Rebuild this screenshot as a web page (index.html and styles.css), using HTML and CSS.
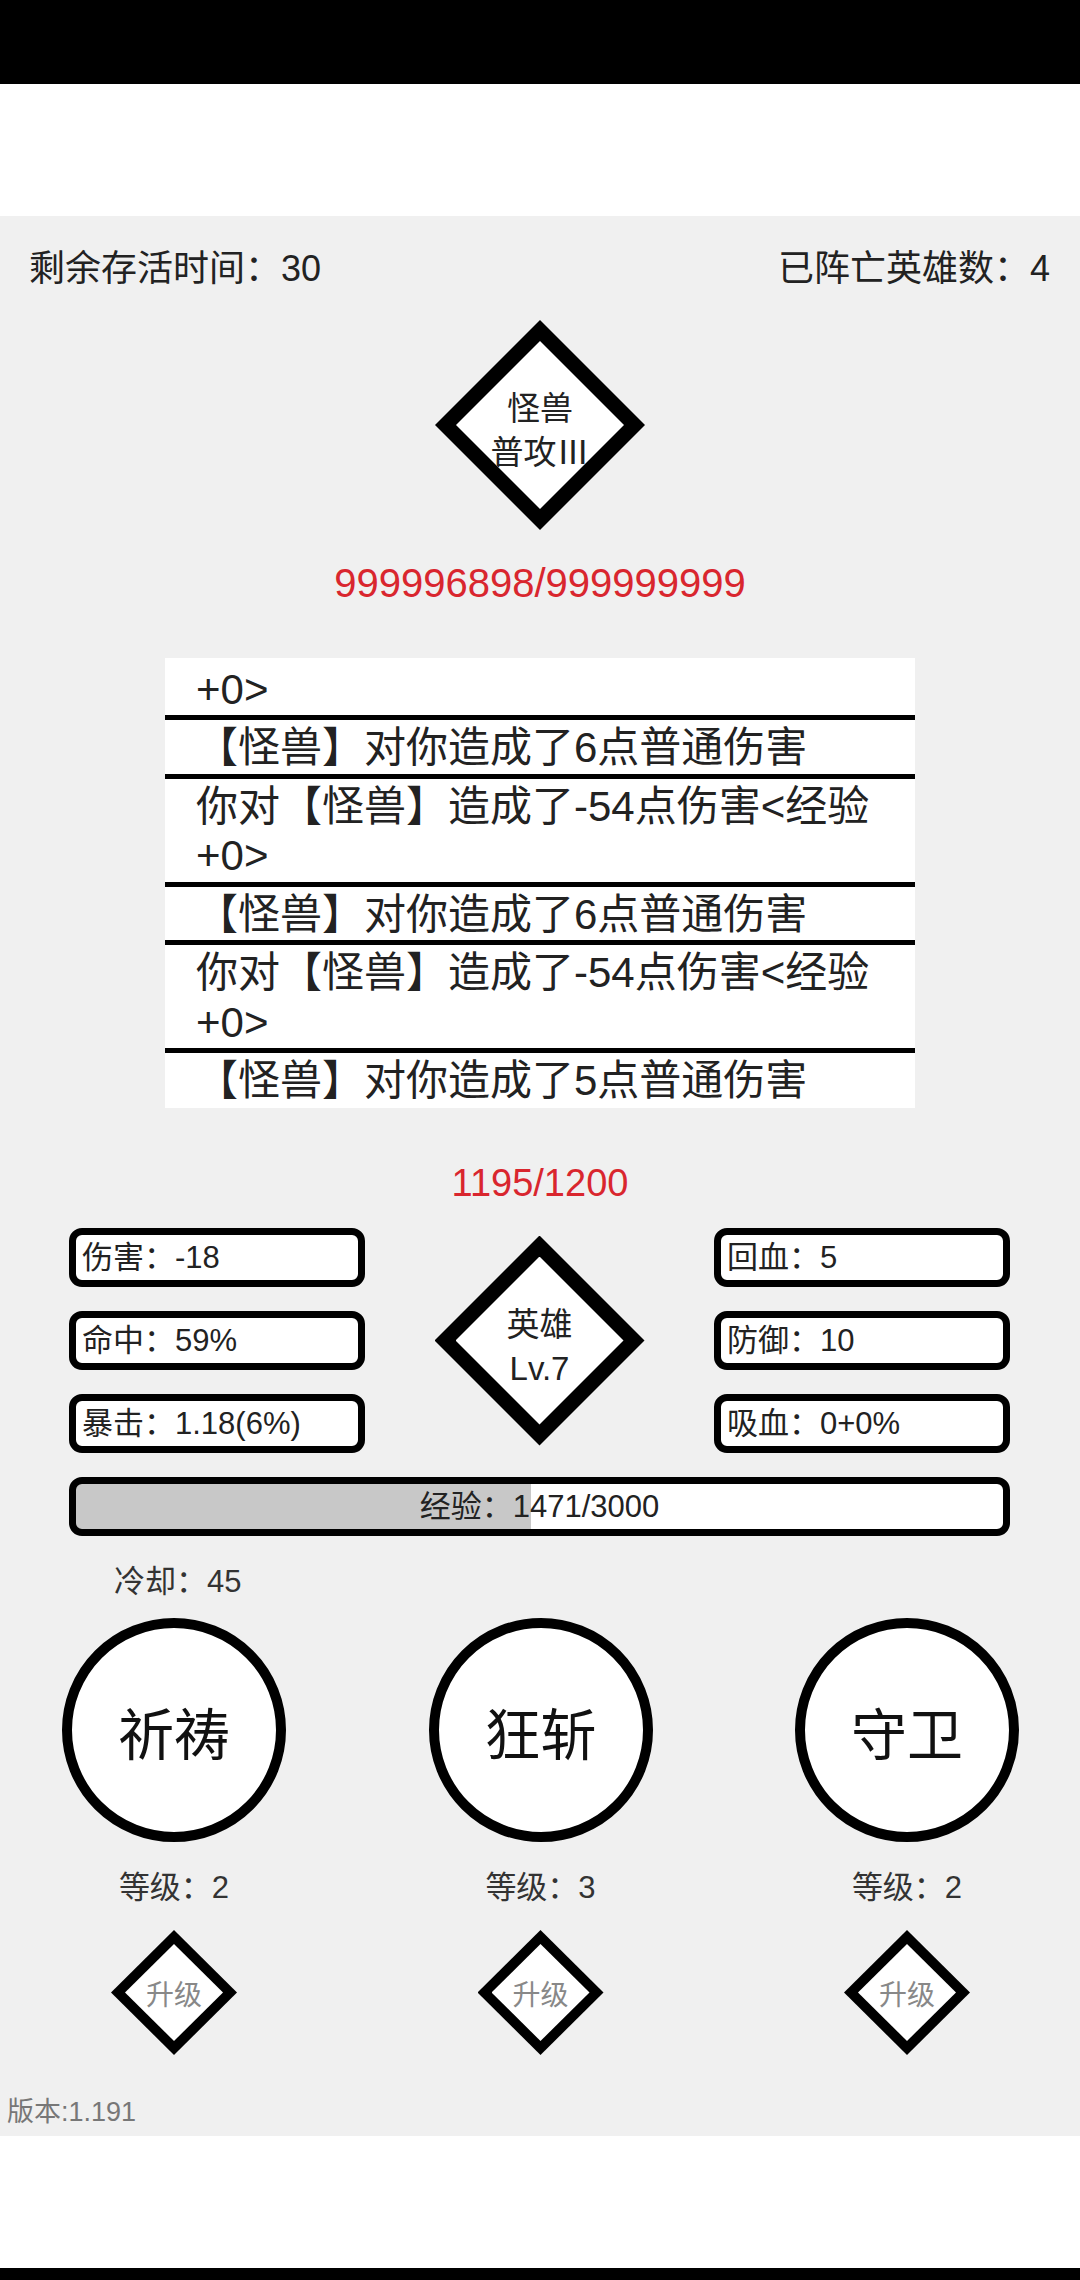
FILE: index.html
```html
<!DOCTYPE html>
<html lang="zh-CN">
<head>
<meta charset="utf-8">
<title>怪兽</title>
<link rel="stylesheet" href="styles.css">
</head>
<body>
<div class="statusbar"></div>
<div class="topspace"></div>
<main class="game">
  <div class="topbar">
    <span>剩余存活时间：30</span>
    <span>已阵亡英雄数：4</span>
  </div>
  <div class="rhomb big boss">
    <div class="rhomb-inner">
      <div>怪兽</div>
      <div>普攻Ⅲ</div>
    </div>
  </div>
  <div class="hp boss-hp">999996898/999999999</div>
  <div class="log">
    <div class="log-list">
      <div class="log-row">你对【怪兽】造成了-54点伤害&lt;经验+0&gt;</div>
      <div class="log-row">【怪兽】对你造成了6点普通伤害</div>
      <div class="log-row">你对【怪兽】造成了-54点伤害&lt;经验+0&gt;</div>
      <div class="log-row">【怪兽】对你造成了6点普通伤害</div>
      <div class="log-row">你对【怪兽】造成了-54点伤害&lt;经验+0&gt;</div>
      <div class="log-row">【怪兽】对你造成了5点普通伤害</div>
    </div>
  </div>
  <div class="hp hero-hp">1195/1200</div>
  <div class="stats">
    <div class="stat-col">
      <div class="stat">伤害：-18</div>
      <div class="stat">命中：59%</div>
      <div class="stat">暴击：1.18(6%)</div>
    </div>
    <div class="rhomb big hero">
      <div class="rhomb-inner">
        <div>英雄</div>
        <div>Lv.7</div>
      </div>
    </div>
    <div class="stat-col">
      <div class="stat">回血：5</div>
      <div class="stat">防御：10</div>
      <div class="stat">吸血：0+0%</div>
    </div>
  </div>
  <div class="exp" style="--p: 49.03%">经验：1471/3000</div>
  <div class="cooldown">冷却：45</div>
  <div class="skills">
    <div class="skill">
      <div class="skill-btn">祈祷</div>
      <div class="level">等级：2</div>
      <div class="rhomb upgrade"><div class="rhomb-inner">升级</div></div>
    </div>
    <div class="skill">
      <div class="skill-btn">狂斩</div>
      <div class="level">等级：3</div>
      <div class="rhomb upgrade"><div class="rhomb-inner">升级</div></div>
    </div>
    <div class="skill">
      <div class="skill-btn">守卫</div>
      <div class="level">等级：2</div>
      <div class="rhomb upgrade"><div class="rhomb-inner">升级</div></div>
    </div>
  </div>
  <div class="version">版本:1.191</div>
</main>
<div class="bottomspace"></div>
<div class="navbar"></div>
</body>
</html>
```
FILE: styles.css
```css
html, body {
  margin: 0;
  padding: 0;
}
body {
  width: 1080px;
  background: #fff;
  font-family: "Liberation Sans", "Noto Sans CJK SC", sans-serif;
  color: #222;
}
.statusbar {
  height: 84px;
  background: #000;
}
.topspace {
  height: 132px;
  background: #fff;
}
.game {
  height: 1920px;
  background: #f0f0f0;
  display: flex;
  flex-direction: column;
  overflow: hidden;
}
.topbar {
  margin-top: 28px;
  display: flex;
  justify-content: space-between;
  padding: 0 30px 0 29px;
  font-size: 36px;
  line-height: 50px;
  color: #222;
}
.rhomb {
  background: #000;
  clip-path: polygon(50% 0, 100% 50%, 50% 100%, 0 50%);
  display: flex;
  flex: none;
}
.rhomb-inner {
  flex: 1;
  background: #fff;
  clip-path: polygon(50% 0, 100% 50%, 50% 100%, 0 50%);
  display: flex;
  flex-direction: column;
  align-items: center;
  justify-content: center;
  white-space: nowrap;
}
.rhomb.big {
  width: 210px;
  height: 210px;
}
.rhomb.big .rhomb-inner {
  margin: 21px;
  padding-top: 12px;
  font-size: 33px;
  line-height: 44px;
  color: #222;
}
.boss {
  margin: 26px auto 0;
}
.hp {
  margin-top: 28px;
  text-align: center;
  color: #d9262e;
  font-size: 38px;
  line-height: 50px;
}
.boss-hp {
  font-size: 40px;
}
.log {
  margin: 50px 0 0 165px;
  width: 750px;
  height: 450px;
  background: #fff;
  overflow: hidden;
}
.log-list {
  margin-top: -46px;
}
.log-row {
  padding: 3px 10px 1px 31px;
  font-size: 42px;
  line-height: 49.5px;
  border-bottom: 5px solid #000;
  color: #222;
}
.log-row:last-child {
  border-bottom: none;
}
.hero-hp {
  margin-top: 50px;
}
.stats {
  margin-top: 20px;
  display: flex;
  justify-content: space-between;
  align-items: center;
  padding: 0 70px 0 69px;
}
.stat-col {
  display: flex;
  flex-direction: column;
  gap: 24px;
}
.stat {
  width: 296px;
  height: 59px;
  box-sizing: border-box;
  border: 7px solid #000;
  border-radius: 13px;
  background: #fff;
  padding-left: 6px;
  font-size: 31px;
  line-height: 45px;
  white-space: nowrap;
  color: #222;
}
.exp {
  margin: 24px 70px 0 69px;
  height: 59px;
  box-sizing: border-box;
  border: 7px solid #000;
  border-radius: 13px;
  background: linear-gradient(to right, #c8c8c8 var(--p), #fff var(--p));
  text-align: center;
  font-size: 31px;
  line-height: 45px;
  color: #222;
}
.cooldown {
  margin-top: 24px;
  padding-left: 114px;
  font-size: 31px;
  line-height: 44px;
  color: #333;
}
.skills {
  margin-top: 14px;
  display: flex;
  justify-content: space-between;
  padding: 0 61px 0 62px;
}
.skill {
  width: 224px;
  display: flex;
  flex-direction: column;
  align-items: center;
}
.skill-btn {
  width: 224px;
  height: 224px;
  box-sizing: border-box;
  border: 10px solid #000;
  border-radius: 50%;
  background: #fff;
  display: flex;
  align-items: center;
  justify-content: center;
  font-size: 56px;
  color: #111;
}
.level {
  margin-top: 24px;
  font-size: 31px;
  line-height: 44px;
  color: #333;
}
.upgrade {
  margin-top: 20px;
  width: 126px;
  height: 125px;
}
.upgrade .rhomb-inner {
  margin: 14px;
  font-size: 28px;
  color: #888;
}
.version {
  margin-top: 39px;
  padding-left: 7px;
  font-size: 27px;
  line-height: 36px;
  color: #777;
}
.bottomspace {
  height: 132px;
  background: #fff;
}
.navbar {
  height: 12px;
  background: #000;
}
```
